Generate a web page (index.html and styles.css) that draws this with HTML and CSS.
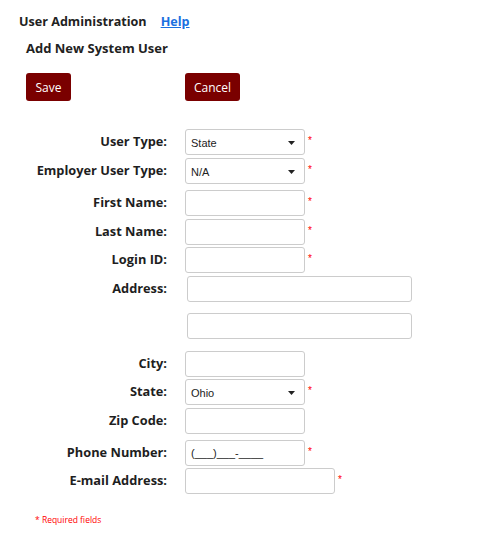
FILE: index.html
```html
<!DOCTYPE html>
<html>
<head>
<meta charset="utf-8">
<link rel="stylesheet" href="styles.css">
</head>
<body>
<div class="page">
  <div class="header">
    <span class="title">User Administration</span>
    <a class="help" href="#">Help</a>
  </div>
  <div class="subtitle">Add New System User</div>
  <div class="actions">
    <button class="btn btn-save">Save</button>
    <button class="btn btn-cancel">Cancel</button>
  </div>
  <div class="form">
    <div class="row">
      <label class="label">User Type:</label>
      <div class="select"><span>State</span><svg width="7" height="4" viewBox="0 0 7 4"><path d="M0 0h7L3.5 4z" fill="#222"/></svg></div>
      <span class="req">*</span>
    </div>
    <div class="row">
      <label class="label">Employer User Type:</label>
      <div class="select"><span>N/A</span><svg width="7" height="4" viewBox="0 0 7 4"><path d="M0 0h7L3.5 4z" fill="#222"/></svg></div>
      <span class="req">*</span>
    </div>
    <div class="row row-loose">
      <label class="label">First Name:</label>
      <input class="input" type="text">
      <span class="req">*</span>
    </div>
    <div class="row">
      <label class="label">Last Name:</label>
      <input class="input" type="text">
      <span class="req">*</span>
    </div>
    <div class="row row-tight">
      <label class="label">Login ID:</label>
      <input class="input" type="text">
      <span class="req">*</span>
    </div>
    <div class="row">
      <label class="label">Address:</label>
      <input class="input input-wide" type="text">
    </div>
    <div class="row row-addr2">
      <span class="label"></span>
      <input class="input input-wide" type="text">
    </div>
    <div class="row row-city">
      <label class="label">City:</label>
      <input class="input" type="text">
    </div>
    <div class="row row-tight">
      <label class="label">State:</label>
      <div class="select"><span>Ohio</span><svg width="7" height="4" viewBox="0 0 7 4"><path d="M0 0h7L3.5 4z" fill="#222"/></svg></div>
      <span class="req">*</span>
    </div>
    <div class="row">
      <label class="label">Zip Code:</label>
      <input class="input" type="text">
    </div>
    <div class="row row-loose">
      <label class="label">Phone Number:</label>
      <input class="input phone" type="text" value="(___)___-____">
      <span class="req">*</span>
    </div>
    <div class="row row-tight">
      <label class="label">E-mail Address:</label>
      <input class="input input-email" type="text">
      <span class="req">*</span>
    </div>
  </div>
  <div class="required-note">* Required fields</div>
</div>
</body>
</html>
```

FILE: styles.css
```css
* { box-sizing: border-box; }
body {
  margin: 0;
  background: #fff;
  font-family: "Open Sans", "Noto Sans", sans-serif;
  color: #222;
}
.page { padding-top: 11px; }
.header {
  display: flex;
  align-items: center;
  padding-left: 19px;
  height: 20px;
  gap: 14px;
}
.title {
  font-weight: 700;
  font-size: 12.6px;
  color: #222;
}
.help {
  font-weight: 700;
  font-size: 12.6px;
  color: #1a6fe0;
  text-decoration: underline;
}
.subtitle {
  margin-top: 7px;
  padding-left: 26px;
  height: 20px;
  line-height: 20px;
  font-weight: 700;
  font-size: 13px;
}
.actions {
  display: flex;
  margin-top: 15px;
  padding-left: 26px;
  gap: 114px;
}
.btn {
  height: 28px;
  border: none;
  border-radius: 3px;
  background: #7a0000;
  color: #fff;
  font-family: "Open Sans", "Noto Sans", sans-serif;
  font-size: 12px;
  padding: 0;
}
.btn-save { width: 45px; }
.btn-cancel { width: 55px; }
.form {
  margin-top: 28px;
  display: flex;
  flex-direction: column;
  gap: 3px;
}
.row {
  display: flex;
  align-items: center;
  height: 26px;
}
.row-loose { margin-top: 3px; }
.row-tight { margin-top: -1px; }
.row-addr2 { margin-top: 8px; }
.row-city { margin-top: 9px; }
.label {
  width: 167px;
  margin-right: 18px;
  padding-bottom: 2px;
  text-align: right;
  font-weight: 700;
  font-size: 12.8px;
  color: #1e1e1e;
  flex: none;
}
.select, .input {
  width: 120px;
  height: 26px;
  border: 1px solid #ccc;
  border-radius: 3px;
  background: #fff;
  flex: none;
}
.select {
  display: flex;
  align-items: center;
  justify-content: space-between;
  padding: 1px 9px 0 5px;
  font-family: "Liberation Sans", Arial, sans-serif;
  font-size: 11px;
  color: #222;
}
.input {
  padding: 0 5px;
  font-family: "Liberation Sans", Arial, sans-serif;
  font-size: 11px;
  color: #222;
  outline: none;
}
.input-wide {
  width: 225px;
  margin-left: 2px;
}
.input-email { width: 150px; }
.req {
  color: #f00;
  font-size: 10px;
  margin-left: 3px;
  align-self: flex-start;
  margin-top: 6px;
  font-family: "Liberation Sans", Arial, sans-serif;
}
.required-note {
  margin-top: 19px;
  padding-left: 35px;
  font-size: 8.5px;
  line-height: 14px;
  color: #f00;
}
```
